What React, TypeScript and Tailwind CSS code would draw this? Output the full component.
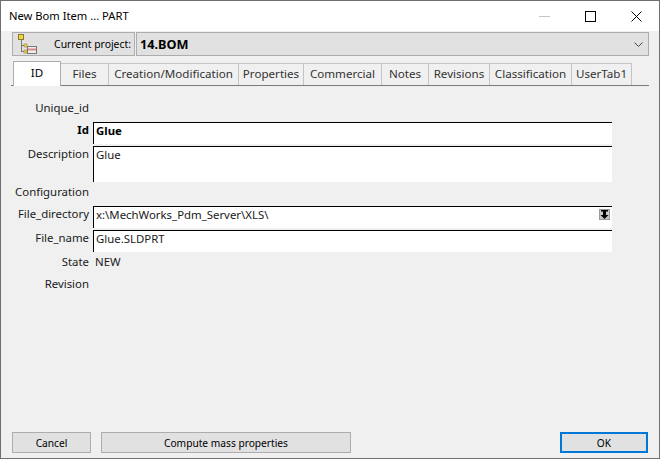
const tabs = [
  { label: "ID", width: "w-[48px]" },
  { label: "Files", width: "w-[48px]" },
  { label: "Creation/Modification", width: "w-[130px]" },
  { label: "Properties", width: "w-[65px]" },
  { label: "Commercial", width: "w-[78px]" },
  { label: "Notes", width: "w-[47px]" },
  { label: "Revisions", width: "w-[61px]" },
  { label: "Classification", width: "w-[82px]" },
  { label: "UserTab1", width: "w-[60px]" },
];

function ProjectIcon() {
  return (
    <svg width="20" height="20" viewBox="0 0 20 20" className="shrink-0">
      <rect x="0.5" y="0.5" width="5" height="5" fill="#f5d442" stroke="#8a7a30" />
      <path d="M3.5 6v12M3.5 11.5h3M3.5 17.5h3" stroke="#777" fill="none" />
      <rect x="6" y="10" width="3" height="3" fill="#f0d040" stroke="#9a8a40" strokeWidth="0.6" />
      <rect x="6" y="16" width="3" height="3" fill="#f0d040" stroke="#9a8a40" strokeWidth="0.6" />
      <rect x="9.5" y="12.5" width="9" height="7" fill="#eee" stroke="#777" />
      <path d="M10 15.5h8" stroke="#d88" strokeWidth="2" />
    </svg>
  );
}

function Label({ text, bold, className }: { text: string; bold?: boolean; className?: string }) {
  return (
    <div className={`w-[88px] shrink-0 text-right ${bold ? "font-bold" : ""} ${className ?? ""}`}>
      {text}
    </div>
  );
}

function Field({ children, className }: { children?: React.ReactNode; className?: string }) {
  return (
    <div
      className={`ml-[4px] w-[519px] h-full flex items-start justify-between bg-white border-t border-l border-black pl-[2px] ${className ?? ""}`}
    >
      {children}
    </div>
  );
}

export default function App() {
  return (
    <div className="w-[660px] h-[459px] flex flex-col bg-[#f0f0f0] border border-[#6f6f6f] overflow-hidden font-['Noto_Sans',sans-serif] text-[11.4px] leading-[16px] text-[#1a1a1a]">
      {/* title bar */}
      <div className="h-[30px] shrink-0 bg-white flex items-center justify-between pl-[8px]">
        <span className="text-black text-[11.2px]">New Bom Item ... PART</span>
        <div className="flex items-center h-full">
          <div className="w-[46px] flex justify-center">
            <svg width="11" height="11" viewBox="0 0 11 11">
              <path d="M0 5.5h11" stroke="#c4c4c4" />
            </svg>
          </div>
          <div className="w-[46px] flex justify-center">
            <svg width="11" height="11" viewBox="0 0 11 11">
              <rect x="0.5" y="0.5" width="10" height="10" fill="none" stroke="#000" />
            </svg>
          </div>
          <div className="w-[46px] flex justify-center">
            <svg width="11" height="11" viewBox="0 0 11 11">
              <path d="M0.5 0.5l10 10M10.5 0.5l-10 10" stroke="#000" />
            </svg>
          </div>
        </div>
      </div>

      {/* project row */}
      <div className="flex h-[24px] shrink-0 ml-[11px] mr-[10px] mt-px gap-px">
        <div className="w-[123px] flex items-center justify-between pl-[5px] pr-[3px] bg-[#e1e1e1] border border-[#adadad]">
          <ProjectIcon />
          <span className="text-black text-[10.4px]">Current project:</span>
        </div>
        <div className="flex-1 flex items-center justify-between pl-[3px] pr-[5px] bg-[#e1e1e1] border border-[#adadad]">
          <span className="font-bold text-[12.7px] text-black">14.BOM</span>
          <svg width="9" height="5" viewBox="0 0 9 5">
            <path d="M0.5 0.5l4 4 4-4" fill="none" stroke="#444" />
          </svg>
        </div>
      </div>

      {/* tabs */}
      <div className="flex h-[25px] shrink-0 ml-[10px] mr-[10px] mt-[5px] pl-[2px] border-b border-[#7a7a7a] text-[11.6px]">
        {tabs.map((tab, i) =>
          i === 0 ? (
            <div
              key={tab.label}
              className={`${tab.width} h-[25px] flex items-center justify-center pb-[3px] bg-white border border-b-0 border-[#adadad] text-black z-10`}
            >
              {tab.label}
            </div>
          ) : (
            <div
              key={tab.label}
              className={`${tab.width} h-[22px] mt-[2px] flex items-center justify-center pb-[2px] bg-[#f0f0f0] border-t border-r border-[#c4c4c4] text-[#333]`}
            >
              {tab.label}
            </div>
          ),
        )}
      </div>

      {/* form */}
      <div className="flex flex-col mt-[12px]">
        <div className="flex h-[22px] items-center pb-[2px]">
          <Label text="Unique_id" />
        </div>
        <div className="flex h-[22px] mt-[2px]">
          <Label text="Id" bold className="text-black" />
          <Field className="font-bold text-black">Glue</Field>
        </div>
        <div className="flex h-[36px] mt-[2px]">
          <Label text="Description" />
          <Field>Glue</Field>
        </div>
        <div className="flex h-[22px] items-center pb-[2px]">
          <Label text="Configuration" />
        </div>
        <div className="flex h-[22px] mt-[2px]">
          <Label text="File_directory" />
          <Field>
            <span>x:\MechWorks_Pdm_Server\XLS\</span>
            <span className="mt-[2px] mr-[2px] w-[11px] h-[11px] flex items-center justify-center bg-[#c8c8c8] border border-[#9a9a9a]">
              <svg width="9" height="9" viewBox="0 0 9 9">
                <path d="M1 0h7v1.5H1zM3 1.5h3V5h2.5L4.5 9 .5 5H3z" fill="#000" />
              </svg>
            </span>
          </Field>
        </div>
        <div className="flex h-[22px] mt-[2px]">
          <Label text="File_name" />
          <Field>Glue.SLDPRT</Field>
        </div>
        <div className="flex h-[22px] items-center pb-[2px]">
          <Label text="State" />
          <span className="ml-[6px]">NEW</span>
        </div>
        <div className="flex h-[22px] items-center pb-[2px]">
          <Label text="Revision" />
        </div>
      </div>

      {/* buttons */}
      <div className="mt-auto mb-[5px] ml-[11px] mr-[11px] flex h-[21px] text-[10.2px]">
        <button className="w-[79px] bg-[#e1e1e1] border border-[#adadad] text-black">Cancel</button>
        <button className="w-[250px] ml-[10px] bg-[#e1e1e1] border border-[#adadad] text-black">
          Compute mass properties
        </button>
        <button className="w-[88px] ml-auto bg-[#e1e1e1] border-2 border-[#0078d7] text-black">OK</button>
      </div>
    </div>
  );
}
